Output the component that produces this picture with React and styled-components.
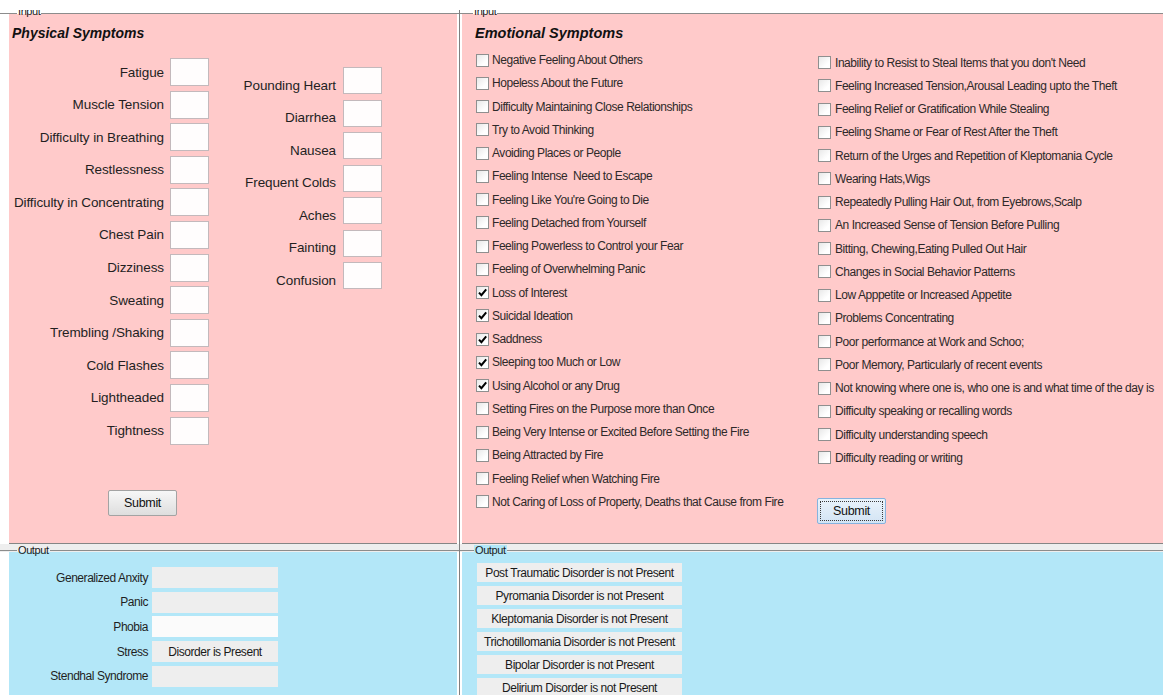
import React from "react";
import styled, { createGlobalStyle } from "styled-components";

const GlobalStyle = createGlobalStyle`
  html, body {
    margin: 0;
    padding: 0;
    background: #ffffff;
    overflow: hidden;
  }
`;

const SANS = `"Liberation Sans", Arial, sans-serif`;

const physicalLeft = [
  "Fatigue",
  "Muscle Tension",
  "Difficulty in Breathing",
  "Restlessness",
  "Difficulty in Concentrating",
  "Chest Pain",
  "Dizziness",
  "Sweating",
  "Trembling /Shaking",
  "Cold Flashes",
  "Lightheaded",
  "Tightness",
];

const physicalRight = [
  "Pounding Heart",
  "Diarrhea",
  "Nausea",
  "Frequent Colds",
  "Aches",
  "Fainting",
  "Confusion",
];

const emotionalLeft = [
  ["Negative Feeling About Others"],
  ["Hopeless About the Future"],
  ["Difficulty Maintaining Close Relationships"],
  ["Try to Avoid Thinking"],
  ["Avoiding Places or People"],
  ["Feeling Intense  Need to Escape"],
  ["Feeling Like You're Going to Die"],
  ["Feeling Detached from Yourself"],
  ["Feeling Powerless to Control your Fear"],
  ["Feeling of Overwhelming Panic"],
  ["Loss of Interest", true],
  ["Suicidal Ideation", true],
  ["Saddness", true],
  ["Sleeping too Much or Low", true],
  ["Using Alcohol or any Drug", true],
  ["Setting Fires on the Purpose more than Once"],
  ["Being Very Intense or Excited Before Setting the Fire"],
  ["Being Attracted by Fire"],
  ["Feeling Relief when Watching Fire"],
  ["Not Caring of Loss of Property, Deaths that Cause from Fire"],
];

const emotionalRight = [
  ["Inability to Resist to Steal Items that you don't Need"],
  ["Feeling Increased Tension,Arousal Leading upto the Theft"],
  ["Feeling Relief or Gratification While Stealing"],
  ["Feeling Shame or Fear of Rest After the Theft"],
  ["Return of the Urges and Repetition of Kleptomania Cycle"],
  ["Wearing Hats,Wigs"],
  ["Repeatedly Pulling Hair Out, from Eyebrows,Scalp"],
  ["An Increased Sense of Tension Before Pulling"],
  ["Bitting, Chewing,Eating Pulled Out Hair"],
  ["Changes in Social Behavior Patterns"],
  ["Low Apppetite or Increased Appetite"],
  ["Problems Concentrating"],
  ["Poor performance at Work and Schoo;"],
  ["Poor Memory, Particularly of recent events"],
  ["Not knowing where one is, who one is and what time of the day is"],
  ["Difficulty speaking or recalling words"],
  ["Difficulty understanding speech"],
  ["Difficulty reading or writing"],
];

const physicalResults = [
  ["Generalized Anxity", ""],
  ["Panic", ""],
  ["Phobia", "", true],
  ["Stress", "Disorder is Present"],
  ["Stendhal Syndrome", ""],
];

const emotionalResults = [
  "Post Traumatic Disorder is not Present",
  "Pyromania Disorder is not Present",
  "Kleptomania Disorder is not Present",
  "Trichotillomania Disorder is not Present",
  "Bipolar Disorder is not Present",
  "Delirium Disorder is not Present",
];

const Window = styled.div`
  margin-top: 10px;
  height: 685px;
  overflow: hidden;
  display: grid;
  grid-template-columns: 459px 1fr;
  font-family: ${SANS};
`;

const Column = styled.div`
  background: #ffffff;
  border-left: ${(p) => (p.$divider ? "1px solid #7f7f7f" : "none")};
`;

const TitleRow = styled.div`
  display: flex;
  align-items: flex-start;
  height: ${(p) => p.$h}px;
  background: ${(p) => p.$bg || "#ffffff"};
`;

const Rule = styled.div`
  box-sizing: border-box;
  height: ${(p) => p.$h}px;
  border-bottom: 1px solid #8c8c8c;
  width: ${(p) => (p.$w ? `${p.$w}px` : "auto")};
  flex: ${(p) => (p.$w ? "none" : "1")};
`;

const Legend = styled.span`
  font-family: ${SANS};
  font-size: 11px;
  letter-spacing: -0.4px;
  line-height: 11px;
  height: 11px;
  margin-top: ${(p) => p.$top}px;
  padding: 0 1px;
  color: #1a1a1a;
  background: ${(p) => p.$bg || "transparent"};
`;

const InputPanel = styled.div`
  box-sizing: border-box;
  height: 530px;
  margin-left: ${(p) => p.$inset}px;
  margin-right: ${(p) => p.$right}px;
  padding-top: 10px;
  background: #ffcaca;
  border-bottom: 1px solid #858585;
`;

const OutputPanel = styled.div`
  height: 143px;
  margin-left: ${(p) => p.$inset}px;
  margin-right: ${(p) => p.$right}px;
  background: #b3e7f8;
  box-sizing: border-box;
  padding-top: ${(p) => p.$top}px;
  padding-left: ${(p) => p.$left || 0}px;
`;

const PanelTitle = styled.div`
  font-family: ${SANS};
  font-weight: 700;
  font-style: italic;
  font-size: ${(p) => p.$size}px;
  line-height: 18px;
  color: #111;
  margin-left: ${(p) => p.$left}px;
`;

/* physical symptoms: label + small text field grids */
const FieldColumns = styled.div`
  display: flex;
  align-items: flex-start;
  margin-top: 16px;
`;

const FieldGrid = styled.div`
  display: grid;
  grid-template-columns: ${(p) => p.$label}px 39px;
  grid-auto-rows: ${(p) => p.$row}px;
  column-gap: ${(p) => p.$gap}px;
  row-gap: ${(p) => p.$rowGap}px;
  margin-top: ${(p) => p.$top || 0}px;
`;

const FieldLabel = styled.label`
  align-self: center;
  text-align: right;
  white-space: nowrap;
  font-family: ${SANS};
  font-size: 13.5px;
  letter-spacing: -0.1px;
  color: #231f1f;
  padding-top: ${(p) => p.$drop || 0}px;
`;

const SymptomBox = styled.input`
  box-sizing: border-box;
  width: 39px;
  height: 100%;
  margin: 0;
  border: 1px solid #c3b9bc;
  background: #fffdfd;
  outline: none;
`;

const Submit = styled.button`
  box-sizing: border-box;
  width: 69px;
  height: 26px;
  margin-top: ${(p) => p.$top}px;
  margin-left: ${(p) => p.$left}px;
  font-family: ${SANS};
  font-size: 12.5px;
  letter-spacing: -0.3px;
  color: #111;
  border-radius: 2px;
  border: 1px solid ${(p) => (p.$focused ? "#86b3de" : "#a3a3a3")};
  background: ${(p) =>
    p.$focused
      ? "linear-gradient(#eaf3fb, #d3e4f4)"
      : "linear-gradient(#f7f7f7, #dedede)"};
  outline: ${(p) => (p.$focused ? "1px dotted #3a3a3a" : "none")};
  outline-offset: -4px;
  padding: 0;
`;

/* emotional symptoms: two checkbox lists */
const CheckColumns = styled.div`
  display: flex;
  align-items: flex-start;
  margin-top: 6.4px;
  margin-left: 14px;
`;

const CheckList = styled.div`
  display: flex;
  flex-direction: column;
  align-items: flex-start;
  width: ${(p) => (p.$w ? `${p.$w}px` : "auto")};
  margin-top: ${(p) => p.$top || 0}px;
`;

const CheckRow = styled.label`
  display: flex;
  align-items: center;
  gap: ${(p) => p.$gap}px;
  height: 23.26px;
  white-space: pre;
  font-family: ${SANS};
  font-size: 12px;
  letter-spacing: -0.45px;
  color: #2e2929;
`;

const Tick = styled.span`
  box-sizing: border-box;
  width: 13px;
  height: 13px;
  flex: none;
  display: flex;
  align-items: center;
  justify-content: center;
  border: 1px solid #8f8f8f;
  background: linear-gradient(135deg, #e8e8e8, #ffffff 70%);
`;

const CheckMark = () => (
  <svg width="11" height="11" viewBox="0 0 11 11">
    <path d="M2 5.6 L4.4 8.2 L9.2 2.4" fill="none" stroke="#000" strokeWidth="2" />
  </svg>
);

/* result read-outs */
const ResultGrid = styled.div`
  display: grid;
  grid-template-columns: 139px 126px;
  grid-auto-rows: 21px;
  column-gap: 4px;
  row-gap: 3.7px;
`;

const ResultLabel = styled.span`
  align-self: center;
  text-align: right;
  white-space: nowrap;
  font-family: ${SANS};
  font-size: 12px;
  letter-spacing: -0.45px;
  color: #1f1f1f;
`;

const ResultField = styled.div`
  display: flex;
  align-items: center;
  justify-content: center;
  width: ${(p) => (p.$w ? `${p.$w}px` : "auto")};
  height: ${(p) => (p.$h ? `${p.$h}px` : "auto")};
  background: ${(p) => (p.$blank ? "#fbfbfb" : "#eeeeee")};
  font-family: ${SANS};
  font-size: 12px;
  letter-spacing: -0.45px;
  color: #1a1a1a;
  white-space: nowrap;
`;

const ResultStack = styled.div`
  display: flex;
  flex-direction: column;
  gap: 4px;
`;

const Check = ({ label, checked, gap }) => (
  <CheckRow $gap={gap}>
    <Tick>{checked && <CheckMark />}</Tick>
    {label}
  </CheckRow>
);

export default function App() {
  return (
    <>
      <GlobalStyle />
      <Window>
        <Column>
          <TitleRow $h={4}>
            <Rule $h={4} $w={17} />
            <Legend $top={-4}>Input</Legend>
            <Rule $h={4} />
          </TitleRow>
          <InputPanel $inset={9} $right={2}>
            <PanelTitle $size={14} $left={3}>
              Physical Symptoms
            </PanelTitle>
            <FieldColumns>
              <FieldGrid $label={155} $gap={6} $row={28} $rowGap={4.6}>
                {physicalLeft.map((s) => (
                  <React.Fragment key={s}>
                    <FieldLabel>{s}</FieldLabel>
                    <SymptomBox />
                  </React.Fragment>
                ))}
              </FieldGrid>
              <FieldGrid $label={127} $gap={7} $row={27} $rowGap={5.5} $top={9}>
                {physicalRight.map((s) => (
                  <React.Fragment key={s}>
                    <FieldLabel $drop={9}>{s}</FieldLabel>
                    <SymptomBox />
                  </React.Fragment>
                ))}
              </FieldGrid>
            </FieldColumns>
            <Submit $top={45} $left={99}>
              Submit
            </Submit>
          </InputPanel>
          <TitleRow $h={8} $bg="#eeeeee">
            <Rule $h={7} $w={17} />
            <Legend $top={1}>Output</Legend>
            <Rule $h={7} />
          </TitleRow>
          <OutputPanel $inset={9} $right={2} $top={15}>
            <ResultGrid>
              {physicalResults.map(([name, value, blank]) => (
                <React.Fragment key={name}>
                  <ResultLabel>{name}</ResultLabel>
                  <ResultField $blank={blank}>{value}</ResultField>
                </React.Fragment>
              ))}
            </ResultGrid>
          </OutputPanel>
        </Column>

        <Column $divider>
          <TitleRow $h={4}>
            <Rule $h={4} $w={13} />
            <Legend $top={-4}>Input</Legend>
            <Rule $h={4} />
          </TitleRow>
          <InputPanel $inset={2} $right={0}>
            <PanelTitle $size={14.5} $left={13}>
              Emotional Symptoms
            </PanelTitle>
            <CheckColumns>
              <CheckList $w={342}>
                {emotionalLeft.map(([label, checked]) => (
                  <Check key={label} label={label} checked={checked} gap={3} />
                ))}
              </CheckList>
              <CheckList $top={2.5}>
                {emotionalRight.map(([label, checked]) => (
                  <Check key={label} label={label} checked={checked} gap={4} />
                ))}
                <Submit $focused $top={29} $left={-1}>
                  Submit
                </Submit>
              </CheckList>
            </CheckColumns>
          </InputPanel>
          <TitleRow $h={8} $bg="#eeeeee">
            <Rule $h={7} $w={14} />
            <Legend $top={1} $bg="#b3e7f8">
              Output
            </Legend>
            <Rule $h={7} />
          </TitleRow>
          <OutputPanel $inset={2} $right={0} $top={11} $left={15}>
            <ResultStack>
              {emotionalResults.map((r) => (
                <ResultField key={r} $w={205} $h={19}>
                  {r}
                </ResultField>
              ))}
            </ResultStack>
          </OutputPanel>
        </Column>
      </Window>
    </>
  );
}
